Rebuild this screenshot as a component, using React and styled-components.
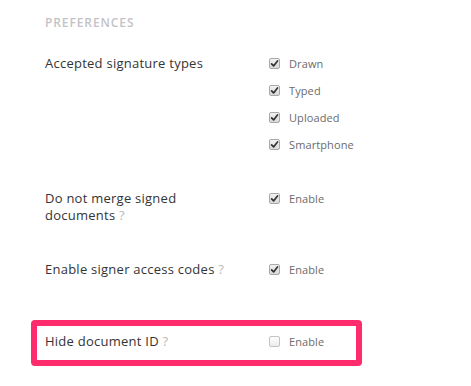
import React from "react";
import styled, { createGlobalStyle } from "styled-components";

const GlobalStyle = createGlobalStyle`
  body {
    margin: 0;
    background: #fff;
    font-family: "Open Sans", "Liberation Sans", sans-serif;
  }
`;

const Check = ({ checked }) => (
  <StBox $checked={checked}>
    {checked && (
      <svg width="9" height="9" viewBox="0 0 9 9">
        <path d="M1.6 4.8 L3.6 6.9 L7.5 1.9" fill="none" stroke="#333" strokeWidth="1.7" strokeLinecap="round" strokeLinejoin="round" />
      </svg>
    )}
  </StBox>
);

const Option = ({ label, checked = true }) => (
  <StOption>
    <Check checked={checked} />
    <span>{label}</span>
  </StOption>
);

const Help = () => <StHelp>?</StHelp>;

const App = () => {
  return (
    <>
      <GlobalStyle />
      <StPage>
        <StTitle>Preferences</StTitle>
        <StRows>
          <StRow>
            <StLabel>Accepted signature types</StLabel>
            <StOptions>
              <Option label="Drawn" />
              <Option label="Typed" />
              <Option label="Uploaded" />
              <Option label="Smartphone" />
            </StOptions>
          </StRow>
          <StRow>
            <StLabel>
              Do not merge signed
              <br />
              documents <Help />
            </StLabel>
            <StOptions>
              <Option label="Enable" />
            </StOptions>
          </StRow>
          <StRow>
            <StLabel>
              Enable signer access codes <Help />
            </StLabel>
            <StOptions>
              <Option label="Enable" />
            </StOptions>
          </StRow>
          <StRow $highlight>
            <StLabel>
              Hide document ID <Help />
            </StLabel>
            <StOptions>
              <Option label="Enable" checked={false} />
            </StOptions>
          </StRow>
        </StRows>
      </StPage>
    </>
  );
};

export default App;

const StPage = styled.div`
  padding: 14px 0 0 45px;
`;

const StTitle = styled.h3`
  margin: 0 0 24px;
  font-size: 12px;
  line-height: 17px;
  font-weight: 600;
  letter-spacing: 0.9px;
  text-transform: uppercase;
  color: #c3c3c7;
`;

const StRows = styled.div`
  display: flex;
  flex-direction: column;
  gap: 37px;
`;

const StRow = styled.div`
  display: grid;
  grid-template-columns: 224px 1fr;
  align-items: start;
  ${({ $highlight }) =>
    $highlight &&
    `
    width: 331px;
    box-sizing: border-box;
    margin: 5px 0 0 -14px;
    padding: 7px 0 10px 8px;
    border: 6px solid #fe2c6c;
    border-radius: 4px;
  `}
`;

const StLabel = styled.div`
  font-size: 13px;
  line-height: 17px;
  letter-spacing: 0.25px;
  color: #343434;
`;

const StHelp = styled.span`
  color: #b9b9bb;
`;

const StOptions = styled.div`
  display: flex;
  flex-direction: column;
  gap: 10px;
`;

const StOption = styled.div`
  display: flex;
  align-items: center;
  gap: 9px;
  height: 17px;
  font-size: 11px;
  letter-spacing: 0.1px;
  color: #6b6b6b;
`;

const StBox = styled.span`
  display: inline-flex;
  align-items: center;
  justify-content: center;
  width: 11px;
  height: 11px;
  box-sizing: border-box;
  border-radius: 2px;
  border: 1px solid ${({ $checked }) => ($checked ? "#a9a9a9" : "#c2c2c2")};
  background: ${({ $checked }) =>
    $checked
      ? "linear-gradient(#f2f2f2, #d9d9d9)"
      : "linear-gradient(#ffffff, #ececec)"};
`;
